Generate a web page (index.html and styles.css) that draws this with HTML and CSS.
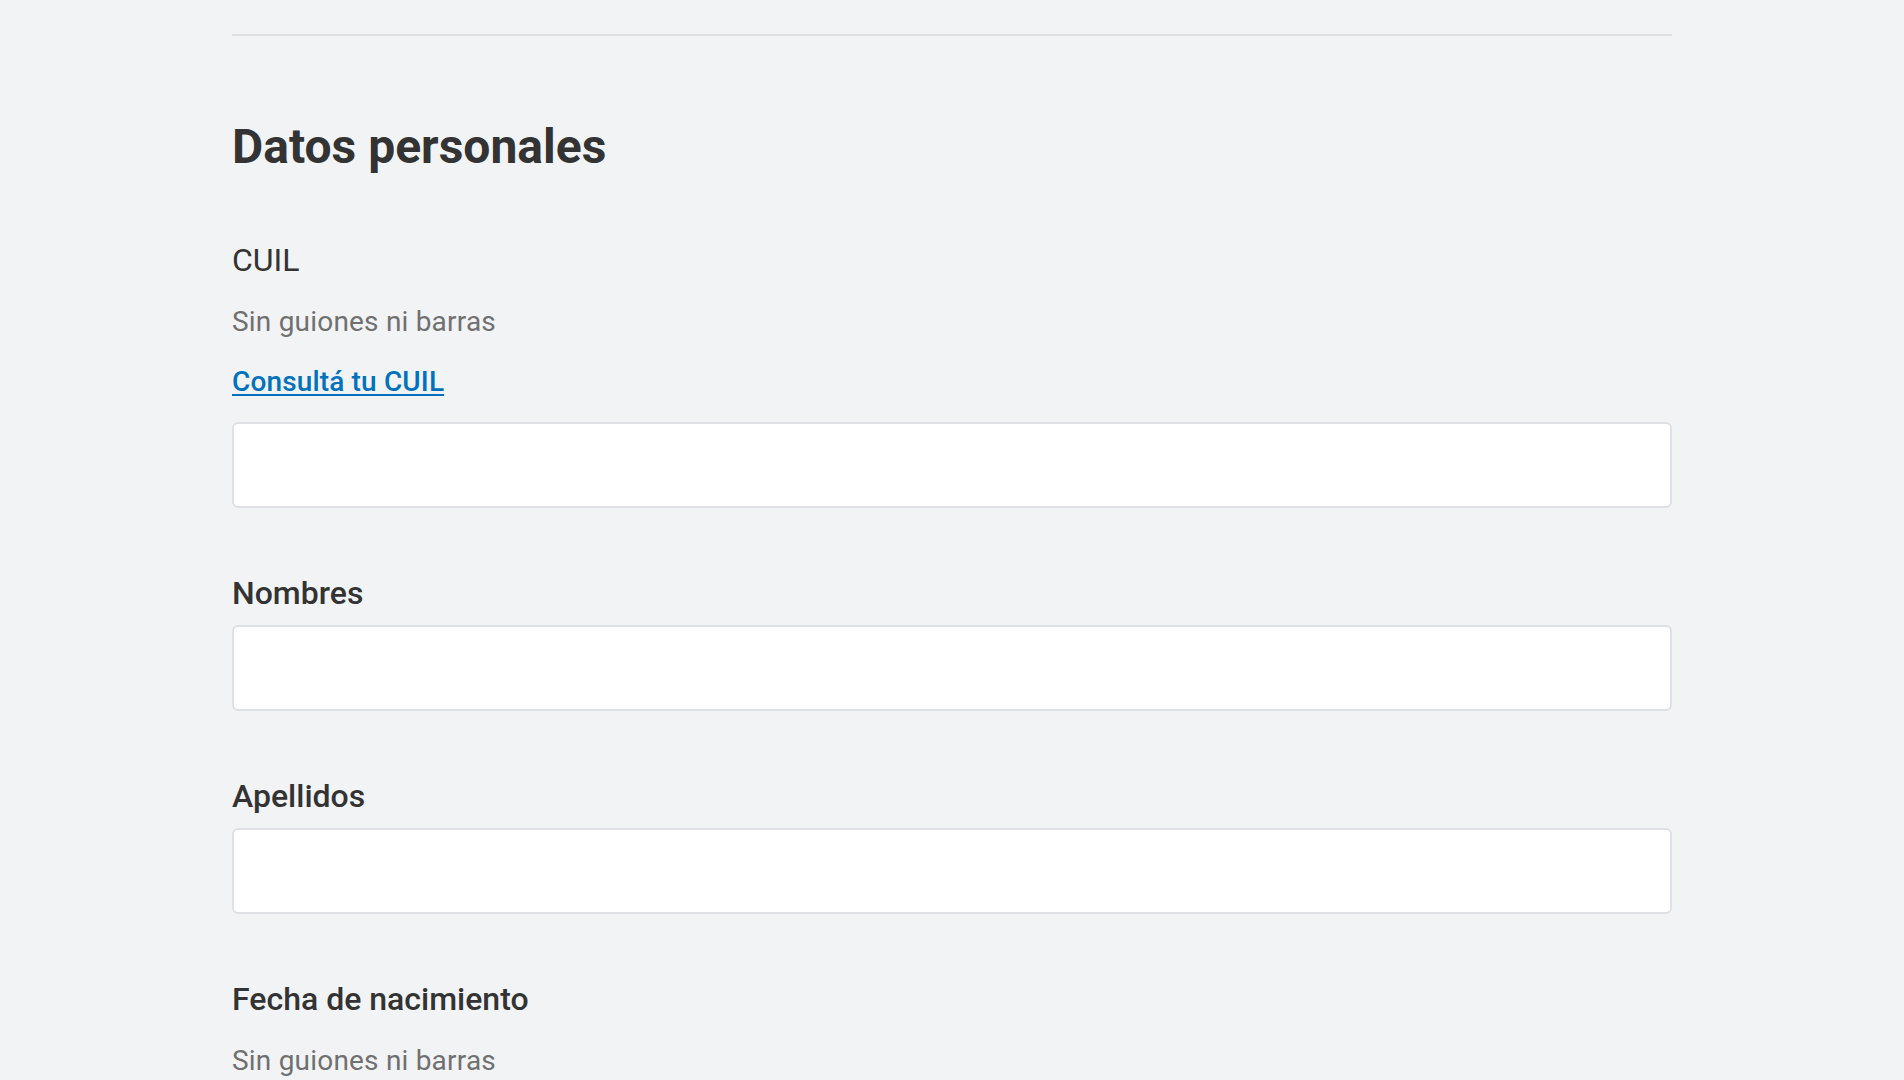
FILE: index.html
```html
<!DOCTYPE html>
<html lang="es">
<head>
<meta charset="utf-8">
<title>Datos personales</title>
<link rel="stylesheet" href="styles.css">
</head>
<body>
<main class="container">
  <div class="divider"></div>
  <h1 class="title">Datos personales</h1>

  <div class="group group-first">
    <div class="legend">CUIL</div>
    <p class="hint">Sin guiones ni barras</p>
    <a class="link" href="#">Consultá tu CUIL</a>
    <input class="field field-after-link" type="text" aria-label="CUIL">
  </div>

  <div class="group">
    <label class="label">Nombres</label>
    <input class="field" type="text" aria-label="Nombres">
  </div>

  <div class="group">
    <label class="label">Apellidos</label>
    <input class="field" type="text" aria-label="Apellidos">
  </div>

  <div class="group">
    <label class="label">Fecha de nacimiento</label>
    <p class="hint">Sin guiones ni barras</p>
  </div>
</main>
</body>
</html>
```

FILE: styles.css
```css
html, body {
  margin: 0;
  padding: 0;
  background: #f2f3f5;
}

body {
  font-family: Roboto, "Liberation Sans", Arial, sans-serif;
  color: #333333;
}

.container {
  width: 1440px;
  margin: 0 auto;
  display: flex;
  flex-direction: column;
  align-items: flex-start;
}

.divider {
  margin-top: 34px;
  height: 2px;
  width: 100%;
  background: #dfe0e4;
}

.title {
  margin: 83px 0 0;
  font-size: 48px;
  line-height: 56px;
  font-weight: 700;
  color: #333333;
}

.group {
  display: flex;
  flex-direction: column;
  align-items: flex-start;
  width: 100%;
  margin-top: 65px;
}

.group-first {
  margin-top: 65px;
}

.legend {
  font-size: 32px;
  line-height: 40px;
  font-weight: 400;
  color: #333333;
}

.label {
  font-size: 32px;
  line-height: 40px;
  font-weight: 500;
  color: #333333;
}

.hint {
  margin: 24px 0 0;
  font-size: 28px;
  line-height: 36px;
  letter-spacing: 0.2px;
  color: #707070;
}

.link {
  margin-top: 24px;
  font-size: 28px;
  line-height: 36px;
  letter-spacing: 0.15px;
  font-weight: 500;
  color: #0072bb;
  text-decoration: underline;
  text-decoration-thickness: 2px;
  text-underline-offset: 3px;
}

.field {
  box-sizing: border-box;
  width: 100%;
  height: 86px;
  margin: 12px 0 0;
  padding: 0 20px;
  background: #ffffff;
  border: 2px solid #dfe0e3;
  border-radius: 6px;
  font-family: inherit;
  font-size: 28px;
  color: #333333;
  outline: none;
}

.field-after-link {
  margin-top: 22px;
}
```
